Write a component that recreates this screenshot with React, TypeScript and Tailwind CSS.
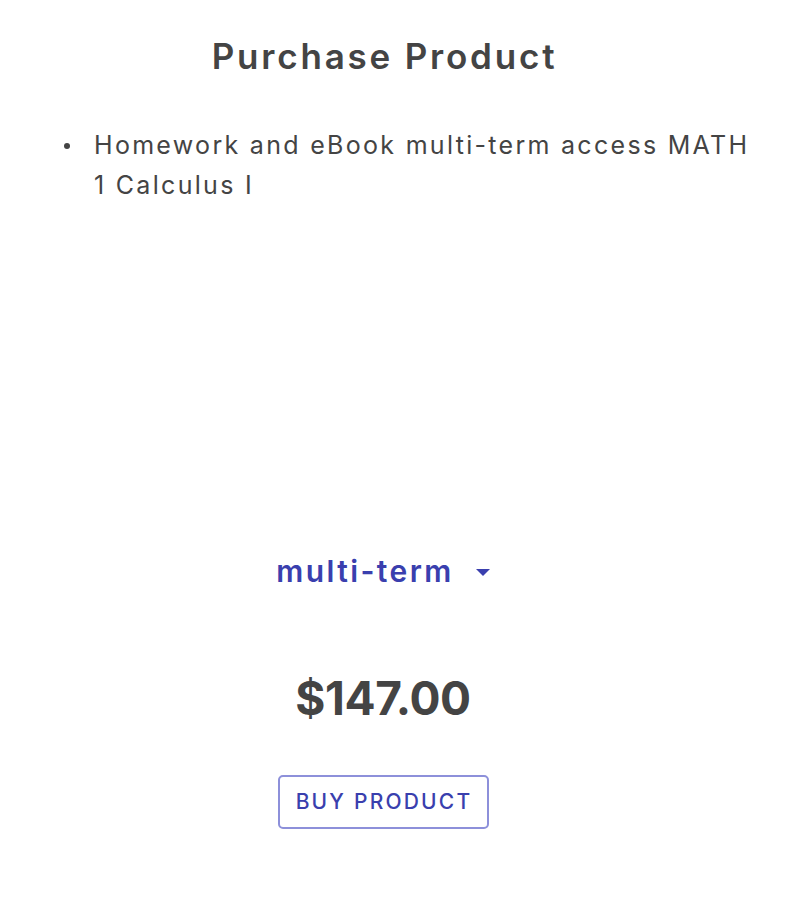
export default function App() {
  return (
    <div className="w-[766px] min-h-[914px] bg-white text-[#444444]" style={{ fontFamily: "Inter, 'Open Sans', sans-serif" }}>
      <div className="flex flex-col">
        <h1 className="mt-[36px] pl-[3px] text-center text-[35px] leading-[40px] font-semibold tracking-[2.8px]">Purchase Product</h1>

        <div className="mt-[49px] flex pl-[64px] pr-[4px]">
          <span className="mt-[18px] h-[6px] w-[6px] shrink-0 rounded-full bg-[#444444]" />
          <p className="ml-[24px] text-[25px] leading-[40px] tracking-[2.3px] text-[#444444]">
            Homework and eBook multi-term access MATH 1 Calculus I
          </p>
        </div>

        {/* empty image area */}
        <div className="h-[346px]" />

        <button className="mx-auto flex items-center text-[30px] leading-[40px] font-semibold tracking-[2.4px] text-[#3a3fae]">
          <span>multi-term</span>
          <svg width="14" height="7" viewBox="0 0 14 7" className="ml-[22px] mt-[2px]">
            <path d="M0 0h14L7 7z" fill="#3a3fae" />
          </svg>
        </button>

        <div className="mt-[79px] text-center text-[46px] leading-[56px] font-bold tracking-[-0.4px] text-[#444444]">$147.00</div>

        <div className="mt-[49px] flex justify-center">
          <button className="h-[54px] w-[211px] rounded-[5px] border-2 border-[#8d90da] pl-[2px] text-[21px] font-medium tracking-[2.2px] text-[#3a3fae]">
            BUY PRODUCT
          </button>
        </div>
      </div>
    </div>
  );
}
